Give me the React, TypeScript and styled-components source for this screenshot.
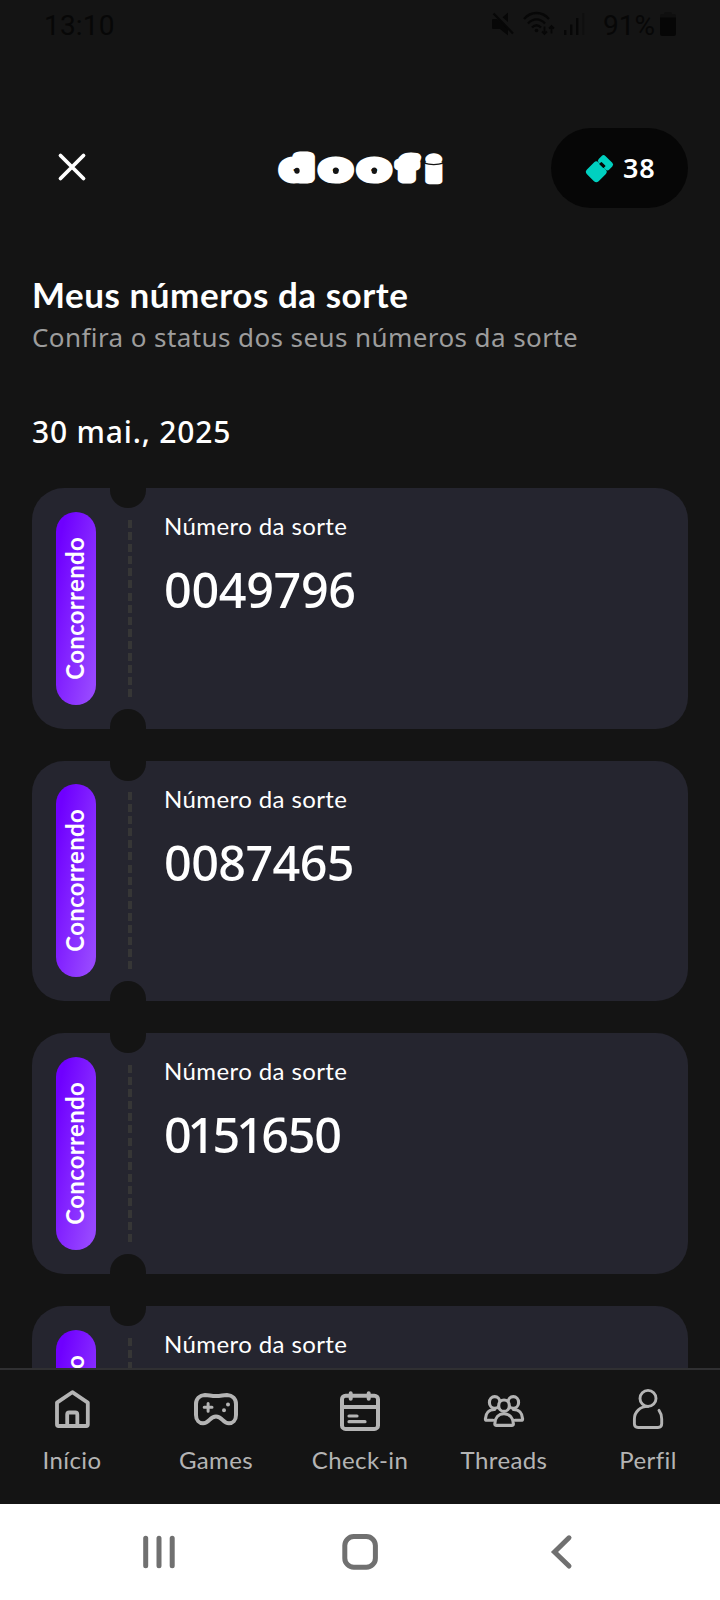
import React from "react";
import styled, { createGlobalStyle } from "styled-components";

const GlobalStyle = createGlobalStyle`
  * { box-sizing: border-box; }
  body { margin: 0; background: #141414; }
  h1, h2, p { margin: 0; }
  svg { display: block; flex: none; overflow: visible; }
`;

const Screen = styled.div`
  width: 720px;
  height: 1600px;
  display: flex;
  flex-direction: column;
  overflow: hidden;
  background: #141414;
  color: #fff;
  font-family: Lato, "Noto Sans", sans-serif;
`;

const StatusBar = styled.div`
  flex: none;
  height: 51px;
  padding: 12px 44px 0 44px;
  display: flex;
  align-items: flex-start;
  color: #070707;
  font: 400 28px/27px Roboto, sans-serif;
`;

const Clock = styled.span`
  margin-right: auto;
  letter-spacing: 0.2px;
`;

const StatusIcons = styled.div`
  display: flex;
  gap: 9px;
`;

const BatteryLevel = styled.span`
  margin: 0 5px 0 18px;
`;

const Header = styled.header`
  flex: none;
  height: 80px;
  margin-top: 77px;
  padding: 0 32px;
  display: grid;
  grid-template-columns: 137px 1fr 137px;
  align-items: center;
  justify-items: center;
`;

const CloseButton = styled.button`
  justify-self: start;
  width: 80px;
  height: 80px;
  padding: 0 0 2px;
  border: 0;
  background: none;
  color: #fff;
  display: flex;
  align-items: center;
  justify-content: center;
`;

const Balance = styled.div`
  width: 137px;
  height: 80px;
  padding-left: 35px;
  border-radius: 40px;
  background: #060606;
  display: flex;
  align-items: center;
  gap: 10px;
  font: 600 27px/36px "Noto Sans", sans-serif;
  letter-spacing: 0.9px;
`;

const Content = styled.main`
  flex: 1;
  min-height: 0;
  overflow: hidden;
  padding: 66px 32px 0;
`;

const Title = styled.h1`
  font-size: 35px;
  line-height: 40px;
  font-weight: 700;
  letter-spacing: 0.54px;
`;

const Subtitle = styled.p`
  margin-top: 7px;
  font: 400 26px/32px "Noto Sans", sans-serif;
  letter-spacing: 0.41px;
  color: #9d9d9d;
`;

const DateHeading = styled.h2`
  margin-top: 59px;
  font: 500 30px/40px "Noto Sans", sans-serif;
  letter-spacing: 0.82px;
`;

const TicketList = styled.div`
  margin-top: 36px;
  display: flex;
  flex-direction: column;
  gap: 32px;
`;

const TicketCard = styled.article`
  flex: none;
  height: 240.67px;
  border-radius: 32px;
  background: #25252f;
  display: flex;
  padding-left: 24px;
`;

const StatusPill = styled.div`
  width: 40px;
  height: 193px;
  margin-top: 23.6px;
  border-radius: 20px;
  background: linear-gradient(to bottom right, #6f00ff 12%, #9747ff 90%);
  display: flex;
  align-items: center;
  justify-content: center;
`;

const StatusText = styled.span`
  writing-mode: vertical-rl;
  transform: translate(-1px, 0) rotate(180deg);
  font-size: 24px;
  line-height: 36px;
  font-weight: 700;
  letter-spacing: 0.3px;
`;

const Perforation = styled.div`
  width: 36px;
  margin-left: 14px;
  display: flex;
  flex-direction: column;
  justify-content: space-between;
`;

const Notch = styled.div<{ $bottom?: boolean }>`
  height: 20px;
  background: #141414;
  border-radius: ${(p) => (p.$bottom ? "18px 18px 0 0" : "0 0 18px 18px")};
`;

const Dashes = styled.div`
  width: 4px;
  height: 177.3px;
  margin-left: 18px;
  background: repeating-linear-gradient(#363636 0 8px, transparent 8px 12.09px);
`;

const TicketBody = styled.div`
  padding: 22px 0 0 18px;
`;

const TicketLabel = styled.p`
  font-size: 24px;
  line-height: 32px;
  letter-spacing: 0.4px;
`;

const TicketNumber = styled.p<{ $tracking: number }>`
  margin-top: 17px;
  font: 500 48.5px/60px "Noto Sans", sans-serif;
  letter-spacing: ${(p) => p.$tracking}px;
`;

const NarrowOne = styled.span`
  margin: 0 -1.5px 0 -3px;
`;

const TabBar = styled.nav`
  flex: none;
  height: 136px;
  border-top: 2px solid #303032;
  display: grid;
  grid-template-columns: repeat(5, 144px);
  background: #141414;
`;

const Tab = styled.a`
  padding-top: 15px;
  display: flex;
  flex-direction: column;
  align-items: center;
  gap: 12px;
  color: #b4b4b4;
  font-size: 24px;
  line-height: 30px;
  letter-spacing: 0.4px;
`;

const SystemBar = styled.div`
  flex: none;
  height: 96px;
  padding: 0 58.5px;
  display: grid;
  grid-template-columns: repeat(3, 1fr);
  align-items: center;
  justify-items: center;
  background: #fff;
  color: #707070;
`;

const Glyph = ({ size = 48, width, children }: { size?: number; width: number; children: React.ReactNode }) => (
  <svg
    width={size}
    height={size}
    viewBox={`0 0 ${size} ${size}`}
    fill="none"
    stroke="currentColor"
    strokeWidth={width}
    strokeLinecap="round"
    strokeLinejoin="round"
  >
    {children}
  </svg>
);

const Wordmark = () => (
  <svg width="164" height="36" viewBox="278 150 164 36" aria-label="doofi">
    <text
      transform="scale(1.37 1)"
      x="207.7 236.4 264.4 292 312.1"
      y="178 178 178 179 180.7"
      fontFamily="Inter, sans-serif"
      fontWeight="900"
      fontSize="28"
      fill="#fff"
      stroke="#fff"
      strokeWidth="11"
      strokeLinejoin="round"
    >
      doo
      <tspan fontWeight="700" strokeWidth="9.2">f</tspan>
      <tspan fontSize="31" strokeWidth="6.4">i</tspan>
    </text>
    <g fill="#141414">
      <ellipse cx="297" cy="170.8" rx="2.7" ry="3" />
      <ellipse cx="335.8" cy="170.8" rx="2.9" ry="3.2" />
      <ellipse cx="374.3" cy="170.8" rx="2.7" ry="3.2" />
    </g>
    <path d="M424.5 163.2c5 1.9 13.5 1.9 18.5 0M424.3 153v10" stroke="#141414" strokeWidth="1.4" fill="none" />
  </svg>
);

const tabs = [
  {
    label: "Início",
    icon: (
      <Glyph width={3.8}>
        <path d="M9 17.6 24.3 7.2 39.8 17.6V39.5Q39.8 41 38.3 41H10.5Q9 41 9 39.5Z" />
        <path d="M19.2 41V29.5Q19.2 27.5 21.2 27.5H27.3Q29.3 27.5 29.3 29.5V41" />
      </Glyph>
    ),
  },
  {
    label: "Games",
    icon: (
      <Glyph width={4}>
        <path d="M13 10C17 10 19 11 24 11S31 10 35 10C40.5 10.3 44 14 44 19V30C44 35.5 40.5 38.3 37 38.3C30.5 38.3 30.5 31.6 24 31.6S17.5 38.3 11 38.3C7.5 38.3 4 35.5 4 30V19C4 14 7.5 10.3 13 10Z" />
        <path d="M12.2 22.3h7.8M16.1 18.4v7.8" strokeWidth="3" />
        <path d="M36 19.4h.01M32 25.2h.01" />
      </Glyph>
    ),
  },
  {
    label: "Check-in",
    icon: (
      <Glyph width={4}>
        <rect x="6" y="10.7" width="36" height="33.3" rx="3.6" />
        <path d="M6 22H42M14.7 8.3v5.4M32.7 8.3v5.4" />
        <path d="M13 31h8M13 36.7h16" strokeWidth="3.2" />
      </Glyph>
    ),
  },
  {
    label: "Threads",
    icon: (
      <Glyph width={3.1}>
        <ellipse cx="14.7" cy="17.4" rx="5.3" ry="5.8" />
        <ellipse cx="33.3" cy="17.4" rx="5.3" ry="5.8" />
        <path d="M13 35.3H6.8Q5.4 35.3 5.4 33.9C5.6 28 9 24.5 14.5 24.5M35 35.3h6.2Q42.6 35.3 42.6 33.9C42.4 28 39 24.5 33.5 24.5" />
        <ellipse cx="24" cy="20.7" rx="5.3" ry="5.7" fill="#141414" />
        <path d="M24 28.8C18.5 28.8 15 33 14.8 38.8Q14.8 40.4 16.4 40.4H31.8Q33.4 40.4 33.4 38.8C33 33 29.5 28.8 24 28.8Z" fill="#141414" />
      </Glyph>
    ),
  },
  {
    label: "Perfil",
    icon: (
      <Glyph width={2.9}>
        <circle cx="24" cy="13.4" r="8" />
        <path d="M24 21.4C16 21.4 10.4 27 10.4 34V38.8Q10.4 42.5 14.1 42.5H34Q37.7 42.5 37.7 38.8V34C37.7 30.5 36.8 27.8 35 25.4" />
      </Glyph>
    ),
  },
];

const tickets = [
  { number: "0049796", tracking: -0.35 },
  { number: "0087465", tracking: -0.6 },
  { number: "0151650", tracking: -1.2 },
  { number: "0163284", tracking: -0.6 },
];

export default function App() {
  return (
    <Screen>
      <GlobalStyle />
      <StatusBar>
        <Clock>13:10</Clock>
        <StatusIcons>
          <svg width="22" height="24" viewBox="0 0 22 24" fill="currentColor">
            <path d="M0 8Q0 7 1 7H5L16 17V23.5L8 17H1Q0 17 0 16ZM16 0.5V10L10.5 5.2Z" />
            <path d="M1.5 1.5 21 21.5" stroke="currentColor" strokeWidth="2.2" />
          </svg>
          <svg width="32" height="24" viewBox="0 0 32 24" fill="none" stroke="currentColor" strokeWidth="2.3">
            <path d="M1 7C8-1 19-1 26 7M5 11.5C10 6 17 6 22 11.5M9 15.5C12 12.5 15 12.5 18 15.5" />
            <path d="M21.5 14.5v7M19 19.5l2.5 2.5 2.5-2.5M28.5 21.5v-7M26 16.5l2.5-2.5 2.5 2.5" strokeWidth="1.8" />
            <circle cx="13.5" cy="18.5" r="1.8" fill="currentColor" stroke="none" />
          </svg>
          <svg width="21" height="24" viewBox="0 0 21 24" fill="currentColor">
            <path d="M0 18h2.4v5H0zM6 12.5h2.4V23H6zM12 6h2.4v17H12z" />
            <path d="M18.4 1h2v22h-2z" fill="#0f0f0f" />
          </svg>
        </StatusIcons>
        <BatteryLevel>91%</BatteryLevel>
        <svg width="16" height="24" viewBox="0 0 16 24">
          <path d="M4 2Q4 0 6 0H10Q12 0 12 2H14Q16 2 16 4V7H0V4Q0 2 2 2Z" fill="#0f0f0f" />
          <path d="M0 5.6H16V22Q16 24 14 24H2Q0 24 0 22Z" fill="#060606" />
        </svg>
      </StatusBar>

      <Header>
        <CloseButton aria-label="Fechar">
          <Glyph size={28} width={3.8}>
            <path d="M2.5 2.5 25.5 25.5M25.5 2.5 2.5 25.5" />
          </Glyph>
        </CloseButton>
        <Wordmark />
        <Balance>
          <svg width="27" height="27" viewBox="0 0 27 27" fill="#00d0c0">
            <rect x="2.05" y="8.6" width="16.5" height="16.5" rx="3.3" transform="rotate(45 10.3 16.85)" />
            <rect x="12" y="3" width="15" height="9.4" rx="2.6" transform="rotate(45 19.5 7.7)" />
            <rect x="13.4" y="8.4" width="6" height="3.2" rx="0.6" transform="rotate(45 16.4 10)" fill="#060606" />
          </svg>
          38
        </Balance>
      </Header>

      <Content>
        <Title>Meus números da sorte</Title>
        <Subtitle>Confira o status dos seus números da sorte</Subtitle>
        <DateHeading>30 mai., 2025</DateHeading>
        <TicketList>
          {tickets.map(({ number, tracking }) => (
            <TicketCard key={number}>
              <StatusPill>
                <StatusText>Concorrendo</StatusText>
              </StatusPill>
              <Perforation>
                <Notch />
                <Dashes />
                <Notch $bottom />
              </Perforation>
              <TicketBody>
                <TicketLabel>Número da sorte</TicketLabel>
                <TicketNumber $tracking={tracking}>
                  {number.split(/(1)/).map((part, i) => (part === "1" ? <NarrowOne key={i}>1</NarrowOne> : part))}
                </TicketNumber>
              </TicketBody>
            </TicketCard>
          ))}
        </TicketList>
      </Content>

      <TabBar>
        {tabs.map((tab) => (
          <Tab key={tab.label}>
            {tab.icon}
            {tab.label}
          </Tab>
        ))}
      </TabBar>

      <SystemBar>
        <Glyph width={5}>
          <path d="M10.7 10.2V37.8M24 10.2V37.8M37.2 10.2V37.8" />
        </Glyph>
        <Glyph width={5}>
          <rect x="8.8" y="8.6" width="30.6" height="30.6" rx="9" />
        </Glyph>
        <Glyph width={5}>
          <path d="M32 9.8 17.5 24 32 38" strokeLinejoin="miter" />
        </Glyph>
      </SystemBar>
    </Screen>
  );
}
